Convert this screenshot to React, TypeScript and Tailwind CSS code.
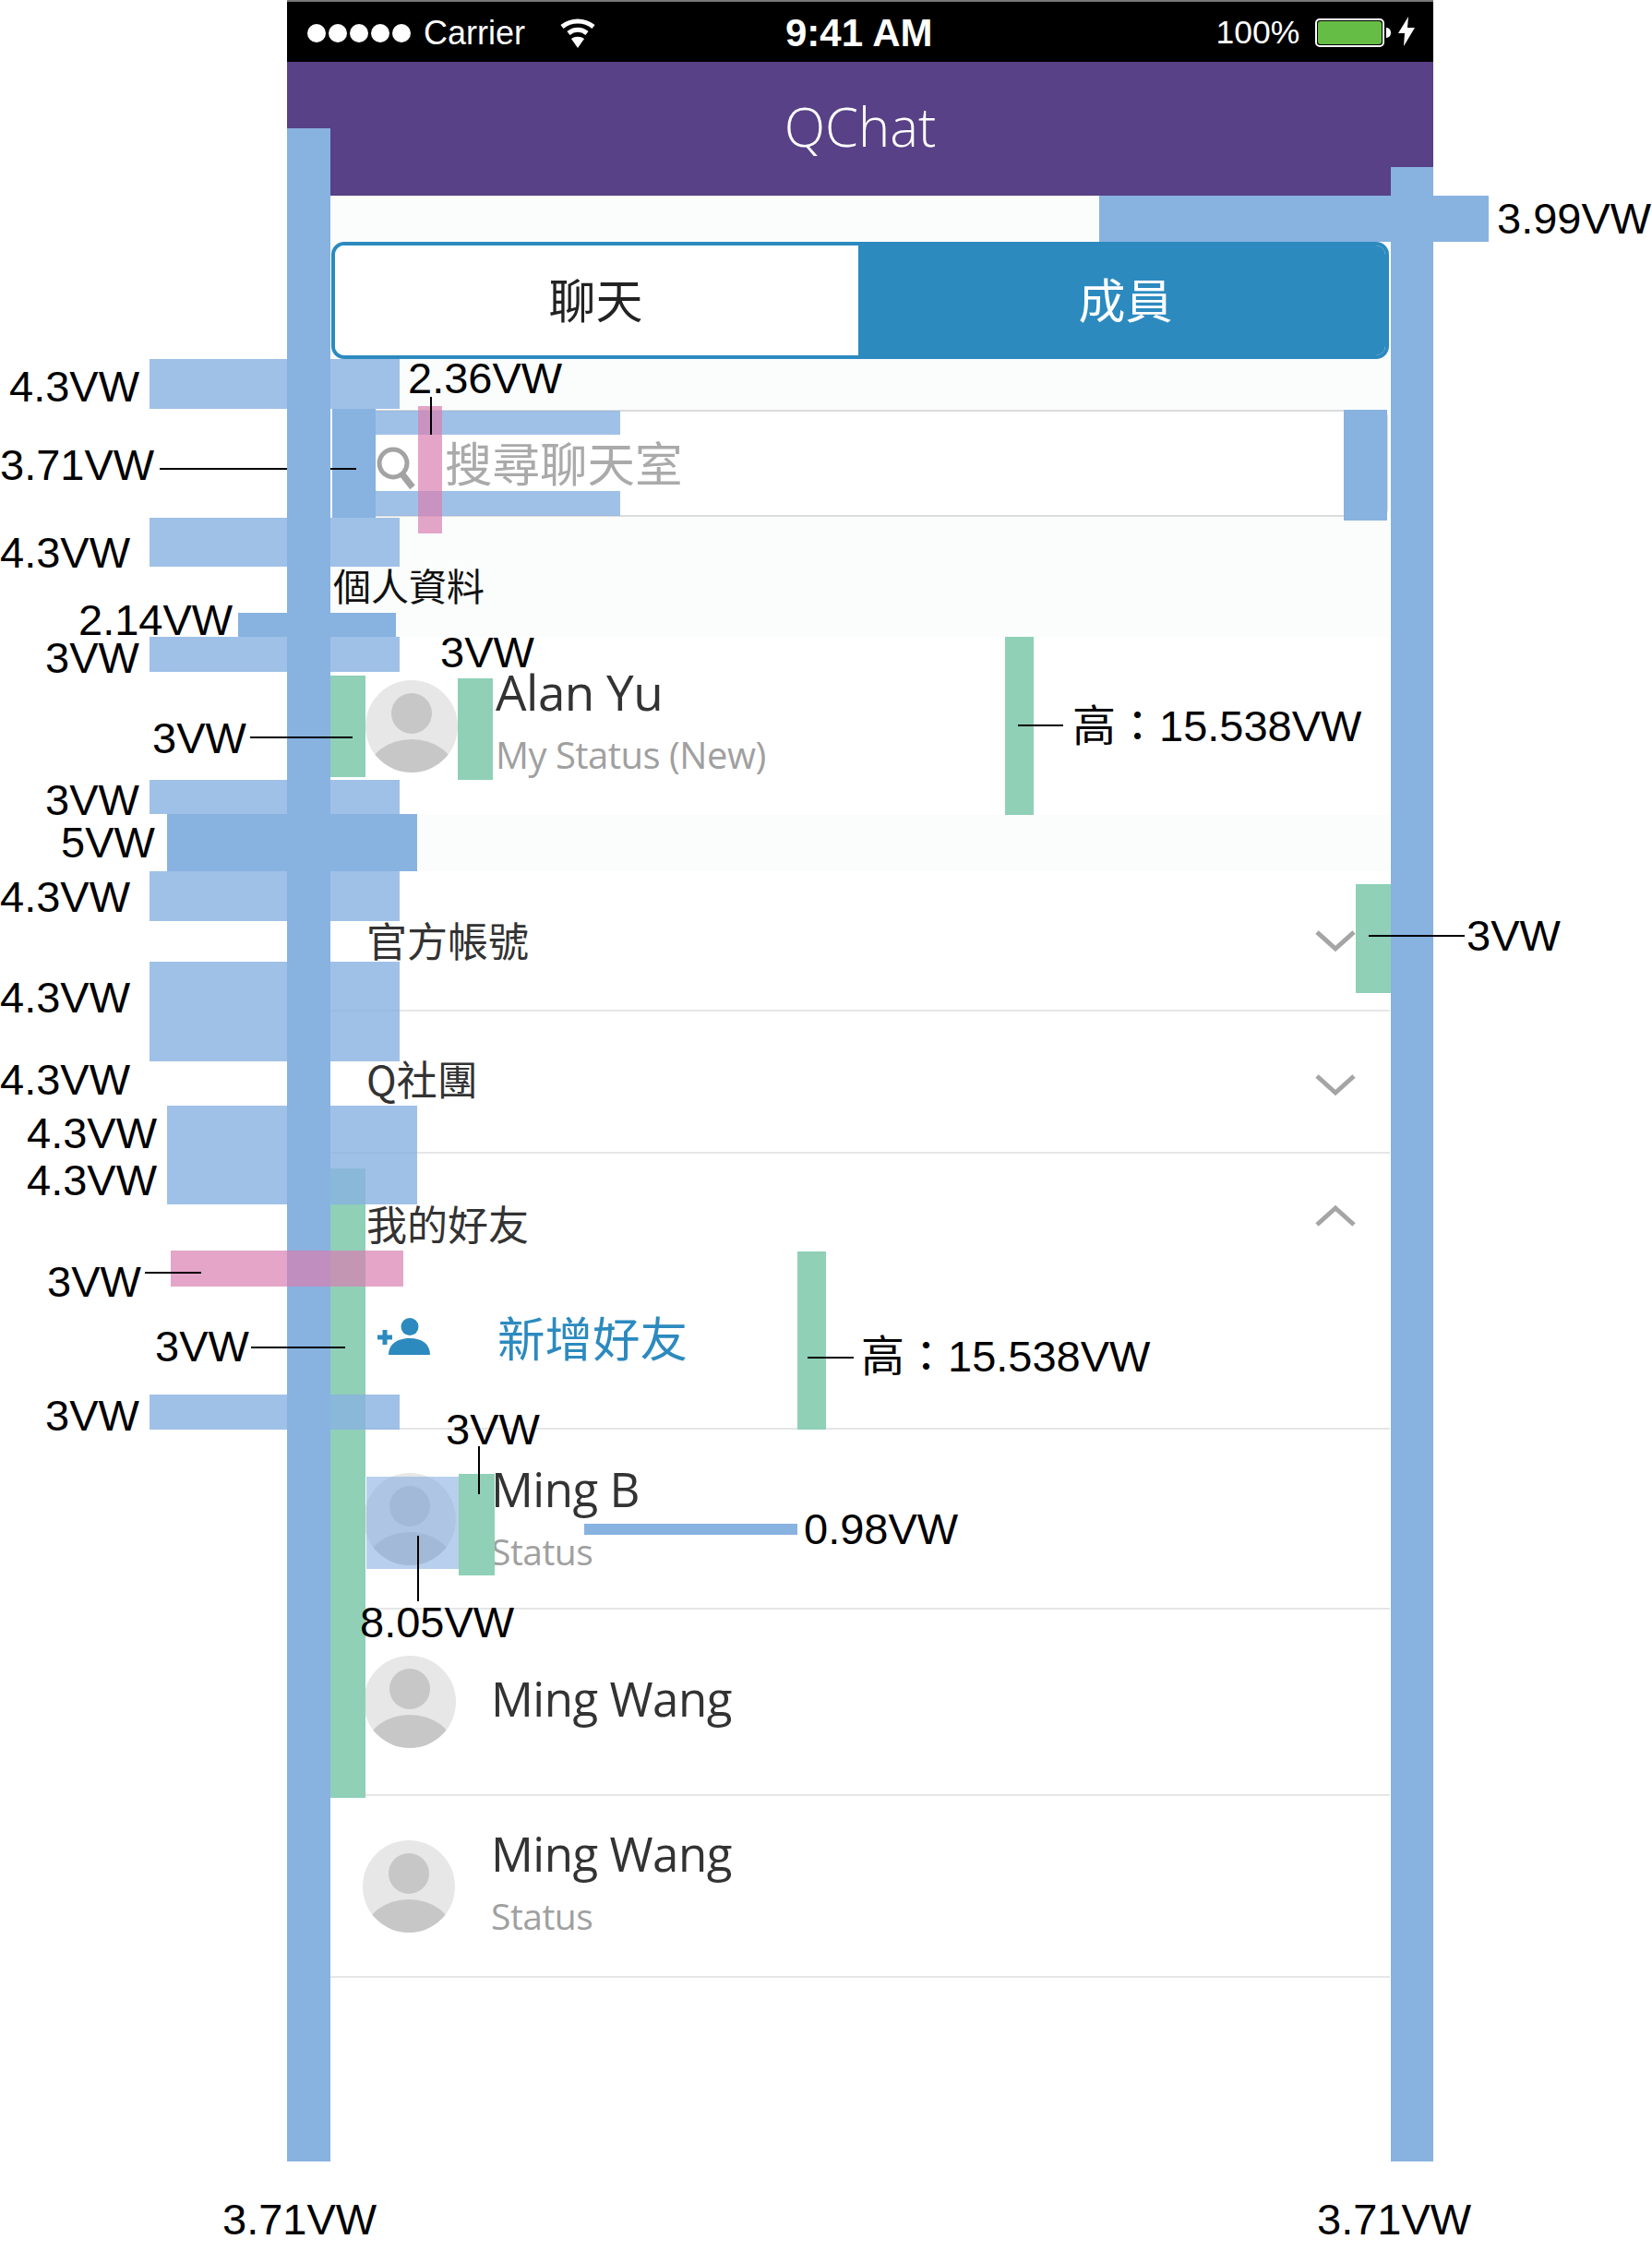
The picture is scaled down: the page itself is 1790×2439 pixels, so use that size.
const sansFont = "font-['Open_Sans','Noto_Sans_CJK_TC',sans-serif]";
const cjkFont = "font-['Noto_Sans_CJK_TC',sans-serif]";

function Avatar() {
  return (
    <svg viewBox="0 0 100 100" className="w-[100px] h-[100px] shrink-0">
      <clipPath id="avatar-clip">
        <circle cx="50" cy="50" r="50" />
      </clipPath>
      <g clipPath="url(#avatar-clip)">
        <rect width="100" height="100" fill="#e6e7e6" />
        <circle cx="50" cy="36" r="22" fill="#c7c7c7" />
        <ellipse cx="50" cy="100" rx="47" ry="36" fill="#c7c7c7" />
      </g>
    </svg>
  );
}

function Chevron({ up = false, className = "" }: { up?: boolean; className?: string }) {
  return (
    <svg viewBox="0 0 44 24" className={`w-[44px] h-[24px] shrink-0 ${className}`} fill="none">
      <path d={up ? "M2 22 22 4l20 18" : "M2 2l20 18L42 2"} stroke="#a5a5a5" strokeWidth="5" />
    </svg>
  );
}

function StatusBar() {
  return (
    <div className="flex items-center h-[67px] bg-black border-t-2 border-[#777] text-white font-['Liberation_Sans',sans-serif] pl-[22px] pt-[2px] relative">
      <div className="flex gap-[3px]">
        {[0, 1, 2, 3, 4].map((i) => (
          <span key={i} className="w-[20px] h-[20px] rounded-full bg-white" />
        ))}
      </div>
      <span className="ml-[14px] text-[36px] leading-none">Carrier</span>
      <svg viewBox="0 0 40 32" className="w-[40px] h-[32px] ml-[37px]" fill="none">
        <path d="M3 9c10-8 24-8 34 0" stroke="#fff" strokeWidth="5" />
        <path d="M10 16c6-5 14-5 20 0" stroke="#fff" strokeWidth="5" />
        <path d="M20 32 13 22c4-3 10-3 14 0z" fill="#fff" />
      </svg>
      <span className="ml-[205px] text-[42px] font-bold leading-none">9:41 AM</span>
      <span className="ml-[307px] text-[35.5px] leading-none">100%</span>
      <div className="ml-[17px] w-[75px] h-[31px] rounded-[5px] border-2 border-white p-[1px]">
        <div className="w-full h-full rounded-[3px] bg-[#65bd45]" />
      </div>
      <span className="w-[5px] h-[11px] rounded-r-full bg-white ml-[2px]" />
      <svg viewBox="0 0 18 32" className="w-[18px] h-[32px] ml-[8px] -mt-[4px]">
        <path d="M11 0 0 18h7l-1 14L18 12h-8z" fill="#fff" />
      </svg>
    </div>
  );
}

function ProfileRow({
  name,
  status,
  className,
  textClass,
  nameClass = "text-[51px]",
  statusClass = "text-[39px]",
}: {
  name: string;
  status?: string;
  className: string;
  textClass: string;
  nameClass?: string;
  statusClass?: string;
}) {
  return (
    <div className={`flex items-center bg-white ${className}`}>
      <Avatar />
      <div className={`flex flex-col text-[#333] ${sansFont} ${textClass}`}>
        <div className={`leading-[64px] tracking-[-0.5px] ${nameClass}`}>{name}</div>
        {status && <div className={`mt-[6px] leading-[60px] text-[#a0a0a0] tracking-[-0.5px] ${statusClass}`}>{status}</div>}
      </div>
    </div>
  );
}

function Phone() {
  return (
    <div className="ml-[311px] w-[1242px] flex flex-col">
      <StatusBar />
      <div className={`flex items-center justify-center h-[145px] bg-[#584187] text-white text-[58px] font-light pb-[6px] ${sansFont}`}>
        QChat
      </div>
      <div className="flex flex-col mx-[47px] bg-[#fbfdfc]">
        <div className="pt-[50px] px-px">
          <div className={`flex h-[127px] rounded-[14px] border-[4px] border-[#2c8abf] overflow-hidden text-[51px] ${cjkFont}`}>
            <div className="w-[567px] flex items-center justify-center bg-white text-[#222] pb-[5px] pr-[2px]">聊天</div>
            <div className="flex-1 flex items-center justify-center bg-[#2c8abf] text-white pl-[8px] pb-[5px]">成員</div>
          </div>
        </div>
        <div className="pt-[55px] px-[2px]">
          <div className="flex items-center h-[116px] bg-white border-y-2 border-r-2 border-l border-[#dcdcdc] rounded-r-[8px] pl-[46px]">
            <svg viewBox="0 0 43 47" className="w-[43px] h-[47px] mt-[10px]" fill="none">
              <circle cx="19" cy="18" r="15" stroke="#a3a3a3" strokeWidth="5" />
              <path d="M29 30l11 14" stroke="#a3a3a3" strokeWidth="7" />
            </svg>
            <span className={`ml-[32px] text-[51.5px] text-[#aaa] leading-none -mt-[5px] ${cjkFont}`}>搜尋聊天室</span>
          </div>
        </div>
        <div className={`h-[131px] pt-[43px] pl-[3px] text-[41px] leading-[60px] text-[#111] ${cjkFont}`}>個人資料</div>
        <ProfileRow
          name="Alan Yu"
          status="My Status (New)"
          className="h-[192px] pl-[38px]"
          textClass="ml-[41px] pb-[9px]"
          nameClass="text-[53px]"
          statusClass="text-[40px]"
        />
        <div className="h-[61px]" />
        <div className={`flex flex-col bg-white text-[44px] text-[#333] ${cjkFont}`}>
          <div className="flex items-center justify-between h-[152px] border-b-2 border-[#e6e6e6] pl-[39px] pr-[37px]">
            <span className="-mt-[3px]">官方帳號</span>
            <Chevron className="mt-[2px]" />
          </div>
          <div className="flex items-center justify-between h-[154px] border-b-2 border-[#e6e6e6] pl-[39px] pr-[37px]">
            <span className="-mt-[8px]">Q社團</span>
            <Chevron className="mt-[8px]" />
          </div>
          <div className="flex items-start justify-between h-[126px] pt-[45px] pl-[39px] pr-[37px]">
            <span className="leading-[60px]">我的好友</span>
            <Chevron up className="mt-[10px]" />
          </div>
          <div className="flex items-center h-[173px] border-b-2 border-[#e6e6e6] pl-[51px] pb-[28px]">
            <svg viewBox="0 0 57 40" className="w-[57px] h-[40px]">
              <circle cx="35" cy="9.5" r="9.5" fill="#2c8abf" />
              <path d="M12 40c0-12 10-18 23-18s22 6 22 18z" fill="#2c8abf" />
              <path d="M0 21h16M8 13v16" stroke="#2c8abf" strokeWidth="5" />
            </svg>
            <span className="ml-[73px] text-[51.5px] text-[#2c8abf] leading-none">新增好友</span>
          </div>
        </div>
        <ProfileRow
          name="Ming B"
          status="Status"
          className="h-[195px] border-b-2 border-[#e6e6e6] pl-[36px]"
          textClass="ml-[38px]"
        />
        <ProfileRow
          name="Ming Wang"
          className="h-[202px] border-b-2 border-[#e6e6e6] pl-[36px]"
          textClass="ml-[38px] pb-[9px]"
        />
        <ProfileRow
          name="Ming Wang"
          status="Status"
          className="h-[197px] border-b-2 border-[#e6e6e6] pl-[35px]"
          textClass="ml-[39px] pb-[6px]"
        />
        <div className="h-[198px] bg-white" />
      </div>
    </div>
  );
}

// redline overlay, everything below sits on top of the mock
function Mark({ className }: { className: string }) {
  return <div className={`absolute ${className}`} />;
}

function Dim({ className, children }: { className: string; children: string }) {
  return (
    <span className={`absolute text-[47px] leading-none text-black whitespace-nowrap font-['Liberation_Sans','Noto_Sans_CJK_TC',sans-serif] ${className}`}>
      {children}
    </span>
  );
}

function Redlines() {
  const green = "bg-[#8fd0b7]";
  const box = "bg-[#88b1e1]/80";
  const bar = "bg-[#88b2e0]";
  const pink = "bg-[#d97fb0]/70";
  return (
    <>
      <Mark className={`${green} left-[358px] top-[732px] w-[38px] h-[110px]`} />
      <Mark className={`${green} left-[496px] top-[735px] w-[38px] h-[110px]`} />
      <Mark className={`${green} left-[1089px] top-[690px] w-[31px] h-[193px]`} />
      <Mark className={`${green} left-[1469px] top-[958px] w-[38px] h-[118px]`} />
      <Mark className={`${green} left-[358px] top-[1266px] w-[38px] h-[682px]`} />
      <Mark className={`${green} left-[864px] top-[1356px] w-[31px] h-[193px]`} />
      <Mark className="bg-[#88b1e1]/60 left-[397px] top-[1600px] w-[100px] h-[100px]" />
      <Mark className={`${green} left-[497px] top-[1597px] w-[39px] h-[110px]`} />

      <Mark className={`${box} left-[162px] top-[389px] w-[271px] h-[54px]`} />
      <Mark className={`${box} left-[407px] top-[445px] w-[265px] h-[26px]`} />
      <Mark className={`${box} left-[407px] top-[532px] w-[265px] h-[27px]`} />
      <Mark className={`${box} left-[162px] top-[561px] w-[271px] h-[53px]`} />
      <Mark className={`${box} left-[162px] top-[690px] w-[271px] h-[38px]`} />
      <Mark className={`${box} left-[162px] top-[845px] w-[271px] h-[37px]`} />
      <Mark className={`${box} left-[162px] top-[944px] w-[271px] h-[54px]`} />
      <Mark className={`${box} left-[162px] top-[1042px] w-[271px] h-[54px]`} />
      <Mark className={`${box} left-[162px] top-[1096px] w-[271px] h-[54px]`} />
      <Mark className={`${box} left-[181px] top-[1198px] w-[271px] h-[53px]`} />
      <Mark className={`${box} left-[181px] top-[1251px] w-[271px] h-[54px]`} />
      <Mark className={`${box} left-[162px] top-[1511px] w-[271px] h-[38px]`} />

      <Mark className={`${bar} left-[311px] top-[139px] w-[47px] h-[2203px]`} />
      <Mark className={`${bar} left-[1507px] top-[181px] w-[46px] h-[2161px]`} />
      <Mark className={`${bar} left-[1191px] top-[212px] w-[422px] h-[50px]`} />
      <Mark className={`${bar} left-[360px] top-[443px] w-[47px] h-[118px]`} />
      <Mark className={`${bar} left-[1456px] top-[444px] w-[47px] h-[120px]`} />
      <Mark className={`${bar} left-[258px] top-[664px] w-[171px] h-[26px]`} />
      <Mark className={`${bar} left-[181px] top-[882px] w-[271px] h-[62px]`} />
      <Mark className={`${bar} left-[633px] top-[1651px] w-[231px] h-[12px]`} />

      <Mark className={`${pink} left-[453px] top-[440px] w-[26px] h-[138px]`} />
      <Mark className={`${pink} left-[185px] top-[1355px] w-[252px] h-[39px]`} />

      <Mark className="bg-black left-[466px] top-[430px] w-[2px] h-[41px]" />
      <Mark className="bg-black left-[173px] top-[507px] w-[138px] h-[2px]" />
      <Mark className="bg-black left-[358px] top-[507px] w-[28px] h-[2px]" />
      <Mark className="bg-black left-[271px] top-[798px] w-[111px] h-[2px]" />
      <Mark className="bg-black left-[1103px] top-[785px] w-[49px] h-[2px]" />
      <Mark className="bg-black left-[1483px] top-[1013px] w-[104px] h-[2px]" />
      <Mark className="bg-black left-[157px] top-[1378px] w-[61px] h-[2px]" />
      <Mark className="bg-black left-[272px] top-[1459px] w-[102px] h-[2px]" />
      <Mark className="bg-black left-[875px] top-[1470px] w-[50px] h-[2px]" />
      <Mark className="bg-black left-[518px] top-[1567px] w-[2px] h-[52px]" />
      <Mark className="bg-black left-[452px] top-[1664px] w-[2px] h-[71px]" />

      <Dim className="left-[442px] top-[386px]">2.36VW</Dim>
      <Dim className="left-[10px] top-[395px]">4.3VW</Dim>
      <Dim className="left-0 top-[480px]">3.71VW</Dim>
      <Dim className="left-0 top-[575px]">4.3VW</Dim>
      <Dim className="left-[85px] top-[648px]">2.14VW</Dim>
      <Dim className="left-[49px] top-[689px]">3VW</Dim>
      <Dim className="left-[477px] top-[683px]">3VW</Dim>
      <Dim className="left-[165px] top-[776px]">3VW</Dim>
      <Dim className="left-[49px] top-[843px]">3VW</Dim>
      <Dim className="left-[66px] top-[889px]">5VW</Dim>
      <Dim className="left-0 top-[948px]">4.3VW</Dim>
      <Dim className="left-0 top-[1057px]">4.3VW</Dim>
      <Dim className="left-0 top-[1146px]">4.3VW</Dim>
      <Dim className="left-[29px] top-[1204px]">4.3VW</Dim>
      <Dim className="left-[29px] top-[1255px]">4.3VW</Dim>
      <Dim className="left-[51px] top-[1365px]">3VW</Dim>
      <Dim className="left-[168px] top-[1435px]">3VW</Dim>
      <Dim className="left-[49px] top-[1510px]">3VW</Dim>
      <Dim className="left-[483px] top-[1525px]">3VW</Dim>
      <Dim className="left-[1162px] top-[763px]">高：15.538VW</Dim>
      <Dim className="left-[933px] top-[1446px]">高：15.538VW</Dim>
      <Dim className="left-[1589px] top-[990px]">3VW</Dim>
      <Dim className="left-[871px] top-[1633px]">0.98VW</Dim>
      <Dim className="left-[390px] top-[1734px]">8.05VW</Dim>
      <Dim className="left-[1622px] top-[213px]">3.99VW</Dim>
      <Dim className="left-[241px] top-[2381px]">3.71VW</Dim>
      <Dim className="left-[1427px] top-[2381px]">3.71VW</Dim>
    </>
  );
}

export default function App() {
  return (
    <div className="relative w-[1790px] h-[2439px] bg-white overflow-hidden">
      <Phone />
      <Redlines />
    </div>
  );
}
